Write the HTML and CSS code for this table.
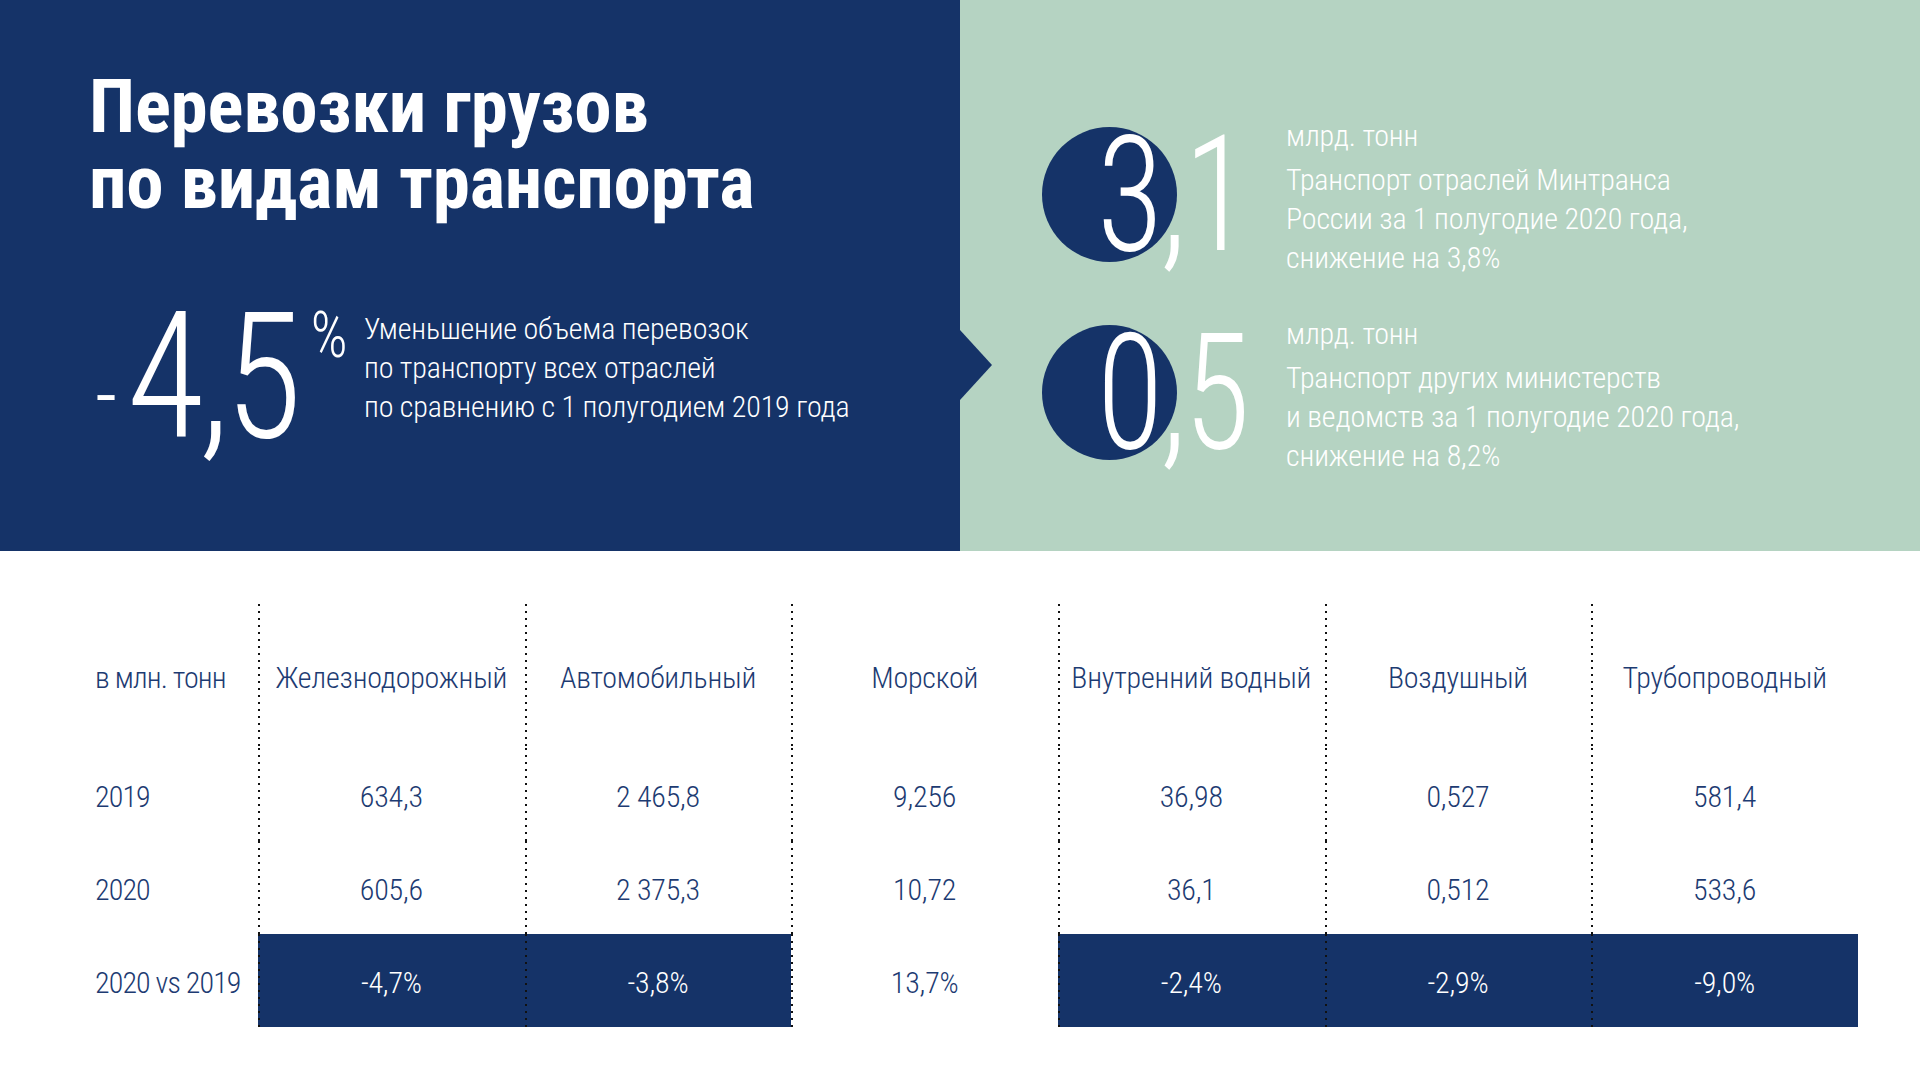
FILE: index.html
```html
<!DOCTYPE html>
<html lang="ru">
<head>
<meta charset="utf-8">
<title>Перевозки грузов по видам транспорта</title>
<link rel="stylesheet" href="styles.css">
</head>
<body>
<div class="top">
  <section class="hero">
    <h1 class="title"><span class="tline">Перевозки грузов</span><span class="tline">по видам транспорта</span></h1>
    <div class="stat">
      <div class="bignum"><span class="minus">-</span>4,5<span class="pct">%</span></div>
      <p class="desc">Уменьшение объема перевозок<br>по транспорту всех отраслей<br>по сравнению с 1 полугодием 2019 года</p>
    </div>
  </section>
  <section class="side">
    <div class="item">
      <div class="badge"><span class="circle"></span><span class="num">3,1</span></div>
      <div class="info">
        <p class="unit">млрд. тонн</p>
        <p class="text">Транспорт отраслей Минтранса<br>России за 1 полугодие 2020 года,<br>снижение на 3,8%</p>
      </div>
    </div>
    <div class="item">
      <div class="badge"><span class="circle"></span><span class="num">0,5</span></div>
      <div class="info">
        <p class="unit">млрд. тонн</p>
        <p class="text">Транспорт других министерств<br>и ведомств за 1 полугодие 2020 года,<br>снижение на 8,2%</p>
      </div>
    </div>
  </section>
</div>

<div class="table">
  <div class="cell head label">в млн. тонн</div>
  <div class="cell head col">Железнодорожный</div>
  <div class="cell head col">Автомобильный</div>
  <div class="cell head col">Морской</div>
  <div class="cell head col">Внутренний водный</div>
  <div class="cell head col">Воздушный</div>
  <div class="cell head col">Трубопроводный</div>

  <div class="cell row label">2019</div>
  <div class="cell row col">634,3</div>
  <div class="cell row col">2 465,8</div>
  <div class="cell row col">9,256</div>
  <div class="cell row col">36,98</div>
  <div class="cell row col">0,527</div>
  <div class="cell row col">581,4</div>

  <div class="cell row label">2020</div>
  <div class="cell row col">605,6</div>
  <div class="cell row col">2 375,3</div>
  <div class="cell row col">10,72</div>
  <div class="cell row col">36,1</div>
  <div class="cell row col">0,512</div>
  <div class="cell row col">533,6</div>

  <div class="cell row label">2020 vs 2019</div>
  <div class="cell row col band">-4,7%</div>
  <div class="cell row col band">-3,8%</div>
  <div class="cell row col">13,7%</div>
  <div class="cell row col band">-2,4%</div>
  <div class="cell row col band">-2,9%</div>
  <div class="cell row col band">-9,0%</div>
</div>
</body>
</html>
```
FILE: styles.css
```css
:root{
  --navy:#153368;
  --green:#b5d3c2;
  --dots:linear-gradient(to bottom,#111 0 2px,transparent 2px 100%) 0 0/2px 7px repeat-y;
}
*{box-sizing:border-box}
html,body{margin:0;padding:0;background:#fff}
body{
  width:1920px;
  height:1080px;
  overflow:hidden;
  font-family:"Roboto Condensed","Roboto","Liberation Sans",sans-serif;
}
p{margin:0}

/* ---------- top band ---------- */
.top{
  display:grid;
  grid-template-columns:960px 960px;
  height:551px;
}
.hero{
  background:var(--navy);
  color:#fff;
  padding:68px 0 0 89px;
}
.title{
  margin:0;
  font-size:75px;
  line-height:76px;
  font-weight:700;
  letter-spacing:-0.2px;
}
.tline{display:block}
.stat{
  display:grid;
  grid-template-columns:275px 1fr;
  margin-top:69px;
}
.bignum{
  font-size:176px;
  line-height:176px;
  font-weight:300;
  letter-spacing:-0.03em;
  white-space:nowrap;
  transform:scaleX(0.9);
  transform-origin:0 0;
  margin-left:6px;
}
.minus{
  font-size:96px;
  line-height:1;
  vertical-align:9px;
  margin-right:16px;
}
.pct{
  font-size:64px;
  line-height:1;
  letter-spacing:0;
  vertical-align:80px;
  margin-left:15px;
}
.desc{
  margin-top:20px;
  font-size:30px;
  line-height:39px;
  font-weight:300;
  letter-spacing:-0.15px;
  white-space:nowrap;
}

/* ---------- side panel ---------- */
.side{
  position:relative;
  background:var(--green);
  color:#fff;
  padding:127px 0 0 82px;
  display:flex;
  flex-direction:column;
  gap:48px;
}
.side::before{
  content:"";
  position:absolute;
  left:0;
  top:330px;
  border-style:solid;
  border-width:35px 0 35px 32px;
  border-color:transparent transparent transparent var(--navy);
}
.item{
  display:grid;
  grid-template-columns:244px 1fr;
}
.badge{
  display:grid;
  align-items:start;
  justify-items:start;
}
.circle,.num{grid-area:1/1}
.circle{
  width:135px;
  height:135px;
  border-radius:50%;
  background:var(--navy);
}
.num{
  margin:-13px 0 0 55px;
  font-size:162px;
  line-height:162px;
  font-weight:300;
  letter-spacing:-0.02em;
  white-space:nowrap;
  transform:scaleX(0.84);
  transform-origin:0 0;
}
.info{
  margin-top:-11px;
  font-size:30px;
  line-height:39px;
  font-weight:300;
  letter-spacing:-0.15px;
  white-space:nowrap;
}
.unit{margin-bottom:5px}

/* ---------- table ---------- */
.table{
  margin-top:53px;
  padding-left:95px;
  display:grid;
  grid-template-columns:163px repeat(6,266.67px);
  grid-template-rows:144px 93px 93px 93px;
  color:#1d3b72;
  font-size:30px;
  font-weight:300;
  letter-spacing:-0.2px;
}
.cell{white-space:nowrap}
.label{letter-spacing:-0.9px}
.head{
  padding-top:54px;
  line-height:40px;
}
.row{
  padding-top:4px;
  line-height:89px;
}
.col{
  text-align:center;
  background:var(--dots);
}
.band{
  color:#fff;
  background:var(--dots),var(--navy);
}
```
